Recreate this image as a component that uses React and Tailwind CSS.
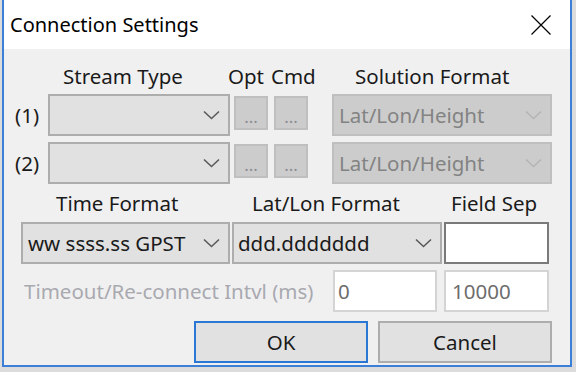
import React from 'react';

const font = { fontFamily: '"Noto Sans", "Open Sans", sans-serif' };

function Chevron({ disabled }) {
  return (
    <svg width="17" height="10" viewBox="0 0 17 10" className="shrink-0">
      <polyline
        points="1,1.5 8.5,8.5 16,1.5"
        fill="none"
        stroke={disabled ? '#b5b5b5' : '#5a5a5a'}
        strokeWidth="1.6"
      />
    </svg>
  );
}

function Combo({ width, text, disabled, pad = 7 }) {
  return (
    <div
      className={`flex items-center h-[42px] border-2 pr-[8px] ${
        disabled ? 'bg-[#cccccc] border-[#bfbfbf] text-[#838383]' : 'bg-[#e1e1e1] border-[#adadad] text-[#1a1a1a]'
      }`}
      style={{ width, paddingLeft: pad - 2 }}
    >
      <span className="flex-1 whitespace-nowrap overflow-hidden">{text}</span>
      <Chevron disabled={disabled} />
    </div>
  );
}

function DotButton({ className = '' }) {
  return (
    <div
      className={`w-[34px] h-[34px] mt-[2px] bg-[#cccccc] border-2 border-[#bfbfbf] flex items-center justify-center text-[#8c8c96] text-[17px] leading-none pt-[6px] ${className}`}
    >
      ...
    </div>
  );
}

export default function App() {
  return (
    <div className="w-[576px] h-[372px] bg-[#dcdcdc] overflow-hidden text-[20.5px]" style={font}>
      <div className="ml-[2px] w-[570px] h-[367px] border-x-2 border-b-2 border-[#3b7fd6] flex flex-col">
        {/* title bar */}
        <div className="h-[49px] bg-white flex items-center justify-between pl-[6px] pr-[19px] text-[#000]">
          <span className="text-[20px]">Connection Settings</span>
          <svg width="20" height="20" viewBox="0 0 20 20">
            <path d="M0.5 0.5 L19.5 19.5 M19.5 0.5 L0.5 19.5" stroke="#000" strokeWidth="1.2" />
          </svg>
        </div>

        {/* client */}
        <div className="flex-1 bg-[#f0f0f0] pt-[9px] text-[#1a1a1a]">
          <div className="h-[36px] flex items-center whitespace-nowrap">
            <span className="ml-[59px] w-[165px]">Stream Type</span>
            <span className="w-[43px]">Opt</span>
            <span className="w-[84px]">Cmd</span>
            <span>Solution Format</span>
          </div>

          <div className="flex h-[42px]">
            <div className="w-[44px] pl-[11px] flex items-center">(1)</div>
            <Combo width={182} text="" />
            <DotButton className="ml-[4px]" />
            <DotButton className="ml-[6px]" />
            <div className="ml-[24px]">
              <Combo width={220} text="Lat/Lon/Height" disabled />
            </div>
          </div>

          <div className="flex h-[42px] mt-[6px]">
            <div className="w-[44px] pl-[11px] flex items-center">(2)</div>
            <Combo width={182} text="" />
            <DotButton className="ml-[4px]" />
            <DotButton className="ml-[6px]" />
            <div className="ml-[24px]">
              <Combo width={220} text="Lat/Lon/Height" disabled />
            </div>
          </div>

          <div className="h-[38px] flex items-center whitespace-nowrap">
            <span className="ml-[52px] w-[196px]">Time Format</span>
            <span className="w-[199px]">Lat/Lon Format</span>
            <span>Field Sep</span>
          </div>

          <div className="flex h-[42px] ml-[17px] gap-[2px]">
            <Combo width={209} text="ww ssss.ss GPST" />
            <Combo width={210} text="ddd.ddddddd" pad={6} />
            <div className="w-[105px] h-[42px] bg-white border-2 border-[#7a7a7a]" />
          </div>

          <div className="flex h-[42px] mt-[6px] items-center">
            <span className="w-[329px] pl-[20px] text-[#a9a9b0] whitespace-nowrap">Timeout/Re-connect Intvl (ms)</span>
            <div className="w-[104px] h-[42px] bg-white border-2 border-[#d4d4d4] flex items-center pl-[3px] text-[#6d6d6d]">0</div>
            <div className="ml-[7px] w-[105px] h-[42px] bg-white border-2 border-[#d4d4d4] flex items-center pl-[6px] text-[#6d6d6d]">10000</div>
          </div>

          <div className="flex h-[42px] mt-[9px] ml-[190px] gap-[10px]">
            <button className="w-[174px] h-[42px] bg-[#e1e1e1] border-2 border-[#2b78d4] text-[#1a1a1a]">OK</button>
            <button className="w-[174px] h-[42px] bg-[#e1e1e1] border-2 border-[#adadad] text-[#1a1a1a]">Cancel</button>
          </div>
        </div>
      </div>
    </div>
  );
}
